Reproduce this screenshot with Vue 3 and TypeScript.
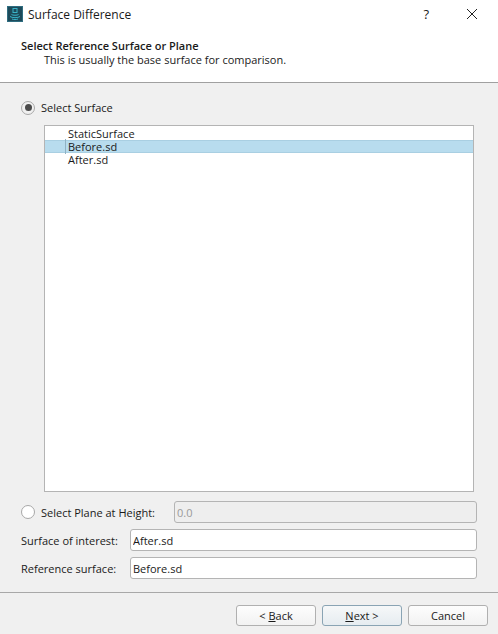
<script setup lang="ts">
const surfaces = ["StaticSurface", "Before.sd", "After.sd"];
const selected = "Before.sd";
</script>

<template>
  <div class="dialog">
    <div class="titlebar">
      <svg class="app-icon" width="16" height="16" viewBox="0 0 16 16">
        <rect width="16" height="16" fill="#1d4a5a" />
        <rect x="0.5" y="0.5" width="15" height="15" fill="none" stroke="#2f6d80" />
        <rect x="6" y="2.5" width="4" height="4" fill="none" stroke="#39b3c9" />
        <path d="M4.5 8.5c1 1 6 1 7 0M3 10.5c2 1.6 8 1.6 10 0M5 13c1.500.8 4.500.8 6 0" fill="none" stroke="#39b3c9" />
      </svg>
      <span class="title">Surface Difference</span>
      <span class="help">?</span>
      <svg class="close" width="12" height="12" viewBox="0 0 12 12">
        <path d="M1 1l10 10M11 1L1 11" stroke="#222" fill="none" />
      </svg>
    </div>
    <header class="header">
      <div class="heading">Select Reference Surface or Plane</div>
      <div class="subheading">This is usually the base surface for comparison.</div>
    </header>
    <main class="body">
      <label class="radio-row">
        <span class="radio checked"></span>
        <span>Select Surface</span>
      </label>
      <ul class="list">
        <li v-for="s in surfaces" :key="s" :class="{ selected: s === selected }">
          <span class="item-text">{{ s }}</span>
        </li>
      </ul>
      <div class="plane-row">
        <label class="radio-row">
          <span class="radio"></span>
          <span>Select Plane at Height:</span>
        </label>
        <input class="field disabled" value="0.0" disabled />
      </div>
      <div class="field-row">
        <label>Surface of interest:</label>
        <input class="field" value="After.sd" />
      </div>
      <div class="field-row">
        <label>Reference surface:</label>
        <input class="field" value="Before.sd" />
      </div>
    </main>
    <footer class="footer">
      <button>&lt; <u>B</u>ack</button>
      <button class="default"><u>N</u>ext &gt;</button>
      <button>Cancel</button>
    </footer>
  </div>
</template>

<style>
html,
body {
  margin: 0;
  background: #f0f0f0;
}
</style>

<style scoped>
.dialog {
  width: 498px;
  height: 634px;
  display: flex;
  flex-direction: column;
  font-family: "Open Sans", "Noto Sans", sans-serif;
  font-size: 11px;
  color: #1a1a1a;
  background: #f0f0f0;
  overflow: hidden;
}
.titlebar {
  height: 30px;
  display: flex;
  align-items: center;
  padding: 0 20px 2px 7px;
  box-sizing: border-box;
  background: #fff;
}
.title {
  margin-left: 5px;
  font-size: 12px;
  flex: 1;
}
.help {
  font-size: 13px;
  margin-right: 37px;
}
.header {
  height: 53px;
  box-sizing: border-box;
  padding: 9px 21px 0;
  background: #fff;
  border-bottom: 1px solid #a0a0a0;
  line-height: 14px;
}
.heading {
  font-weight: 600;
}
.subheading {
  margin-left: 23px;
}
.body {
  flex: 1;
  display: flex;
  flex-direction: column;
  padding: 17px 21px 0;
  box-sizing: border-box;
}
.radio-row {
  display: flex;
  align-items: center;
  gap: 6px;
  height: 15px;
}
.radio {
  width: 14px;
  height: 14px;
  box-sizing: border-box;
  border: 1px solid #a8a8a8;
  border-radius: 50%;
  background: #fff;
  display: flex;
  align-items: center;
  justify-content: center;
}
.radio.checked {
  background: #f0f0f0;
}
.radio.checked::after {
  content: "";
  width: 7px;
  height: 7px;
  border-radius: 50%;
  background: #4a4a4a;
}
.list {
  list-style: none;
  margin: 10px 0 0 23px;
  padding: 1px 0;
  width: 430px;
  height: 367px;
  box-sizing: border-box;
  background: #fff;
  border: 1px solid #b4b4b4;
}
.list li {
  height: 13px;
  line-height: 13px;
  padding-left: 20px;
}
.list li.selected {
  background: #b8dcee;
  border-top: 1px solid #a9cfe2;
  border-bottom: 1px solid #a9cfe2;
  line-height: 11px;
  box-sizing: border-box;
}
.item-text {
  position: relative;
  top: 0;
  padding-left: 3px;
}
.list li.selected .item-text {
  border-left: 1px solid #8fb2c4;
  padding-left: 2px;
  margin-left: 0;
}
.plane-row {
  display: flex;
  align-items: center;
  justify-content: space-between;
  margin-top: 9px;
}
.field-row {
  display: flex;
  align-items: center;
  justify-content: space-between;
  margin-top: 6px;
}
.field {
  height: 22px;
  box-sizing: border-box;
  border: 1px solid #b4b4b4;
  border-radius: 3px;
  background: #fff;
  padding: 0 2px;
  font: inherit;
  color: #1a1a1a;
  outline: none;
}
.plane-row .field {
  width: 303px;
  background: #eeeeee;
  color: #9a9a9a;
}
.field-row .field {
  width: 347px;
}
.footer {
  height: 42px;
  box-sizing: border-box;
  border-top: 1px solid #a8a8a8;
  display: flex;
  justify-content: flex-end;
  gap: 6px;
  padding: 12px 10px 0 0;
}
.footer button {
  width: 80px;
  height: 21px;
  box-sizing: border-box;
  border: 1px solid #b0b0b0;
  border-radius: 3px;
  background: linear-gradient(#fdfdfd, #f2f2f2);
  font: inherit;
  color: #1a1a1a;
  padding: 0;
}
.footer button.default {
  border-color: #8aa4b4;
  background: linear-gradient(#f6f8f9, #e6ecf0);
}
</style>
